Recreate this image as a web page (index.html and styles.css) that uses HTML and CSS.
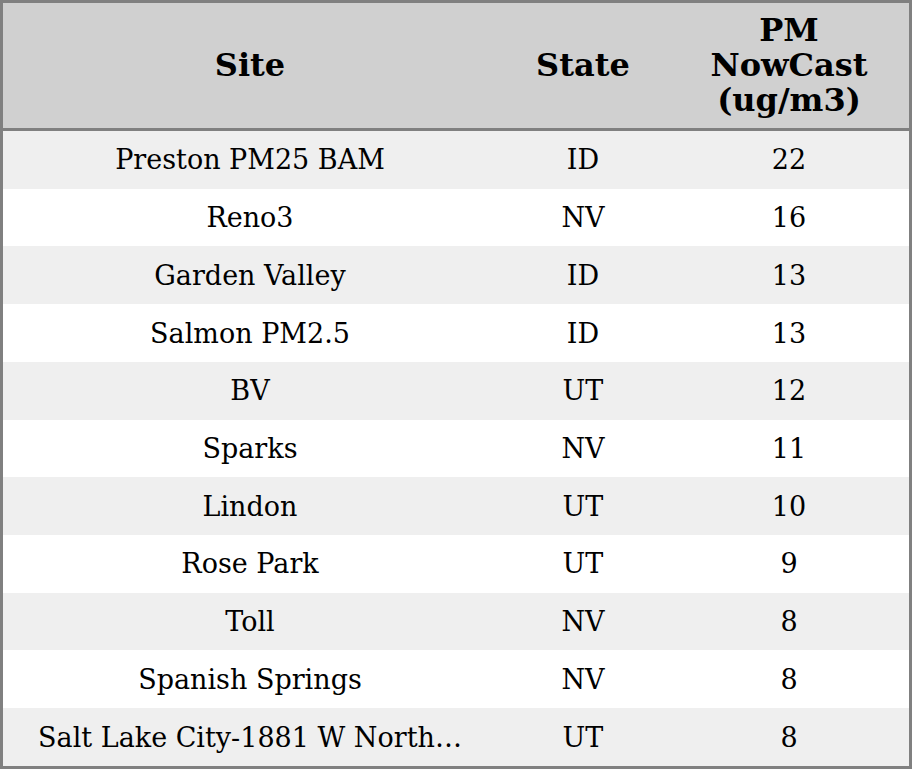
FILE: index.html
```html
<!DOCTYPE html>
<html>
<head>
<meta charset="utf-8">
<link rel="stylesheet" href="styles.css">
</head>
<body>
<table class="aq-table">
  <colgroup>
    <col class="col-site">
    <col class="col-state">
    <col class="col-pm">
  </colgroup>
  <thead>
    <tr>
      <th>Site</th>
      <th>State</th>
      <th>PM<br>NowCast<br>(ug/m3)</th>
    </tr>
  </thead>
  <tbody>
    <tr><td class="site">Preston PM25 BAM</td><td>ID</td><td>22</td></tr>
    <tr><td class="site">Reno3</td><td>NV</td><td>16</td></tr>
    <tr><td class="site">Garden Valley</td><td>ID</td><td>13</td></tr>
    <tr><td class="site">Salmon PM2.5</td><td>ID</td><td>13</td></tr>
    <tr><td class="site">BV</td><td>UT</td><td>12</td></tr>
    <tr><td class="site">Sparks</td><td>NV</td><td>11</td></tr>
    <tr><td class="site">Lindon</td><td>UT</td><td>10</td></tr>
    <tr><td class="site">Rose Park</td><td>UT</td><td>9</td></tr>
    <tr><td class="site">Toll</td><td>NV</td><td>8</td></tr>
    <tr><td class="site">Spanish Springs</td><td>NV</td><td>8</td></tr>
    <tr><td class="site">Salt Lake City-1881 W North…</td><td>UT</td><td>8</td></tr>
  </tbody>
</table>
</body>
</html>
```
FILE: styles.css
```css
html, body {
  margin: 0;
  padding: 0;
  background: #ffffff;
}

.aq-table {
  width: 912px;
  height: 769px;
  table-layout: fixed;
  border-collapse: separate;
  border-spacing: 0;
  border: 3px solid #808080;
  font-family: "DejaVu Serif", serif;
  color: #000000;
}

.col-site { width: 494px; }
.col-state { width: 172px; }
.col-pm { width: 240px; }

.aq-table th {
  height: 128px;
  box-sizing: border-box;
  background: #d0d0d0;
  font-size: 32px;
  font-weight: bold;
  line-height: 35px;
  text-align: center;
  vertical-align: middle;
  padding: 0;
  border-bottom: 3px solid #808080;
}

.aq-table td {
  height: 57.7px;
  box-sizing: border-box;
  font-size: 27px;
  text-align: center;
  vertical-align: middle;
  padding: 0 20px;
  white-space: nowrap;
  overflow: hidden;
}

.aq-table tbody tr:nth-child(odd) td {
  background: #efefef;
}

.aq-table tbody tr:nth-child(even) td {
  background: #ffffff;
}
```
